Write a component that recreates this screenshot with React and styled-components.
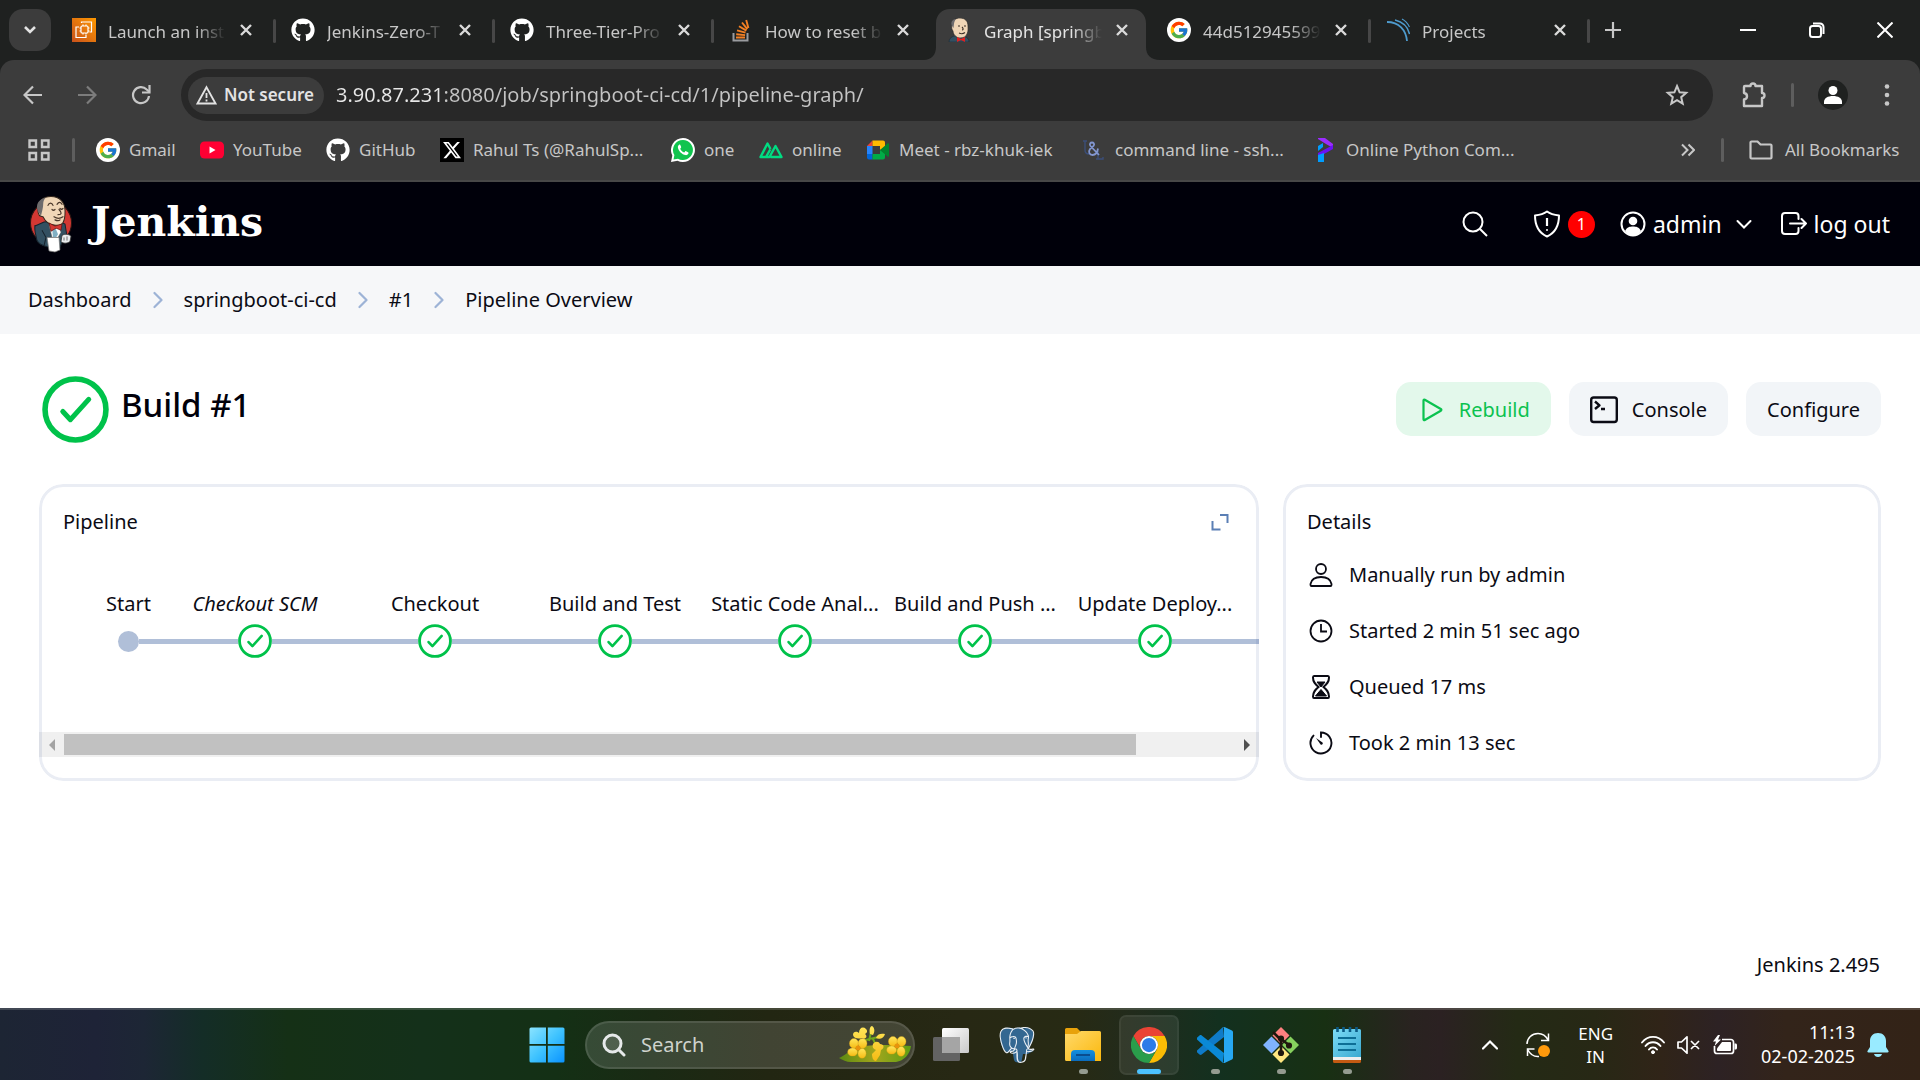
import React from "react";
import styled, { createGlobalStyle, css } from "styled-components";
import { FaGithub, FaXTwitter } from "react-icons/fa6";
import { FcGoogle } from "react-icons/fc";
import { SiPostgresql } from "react-icons/si";

const sans = `"Noto Sans", "Open Sans", sans-serif`;

const GlobalStyle = createGlobalStyle`
  *, *::before, *::after { box-sizing: border-box; }
  body { margin: 0; font-family: ${sans}; font-size: 20px; line-height: 28px; color: #0b0b14; background: #fff; }
  button, input { font: inherit; color: inherit; border: 0; background: none; padding: 0; margin: 0; outline: none; }
  a { color: inherit; text-decoration: none; }
  h1, h2, ul, ol, p { margin: 0; padding: 0; font-weight: 400; list-style: none; }
  svg { display: block; flex: none; }
`;

const Screen = styled.div`
  min-height: 100vh;
  display: flex;
  flex-direction: column;
`;

/* ---------- browser: tab strip ---------- */
const TabStrip = styled.div`
  height: 60px;
  display: flex;
  align-items: center;
  padding: 0 20px 0 9px;
  background: #1f2120;
  color: #c7c7c7;
  font-size: 17px;
`;
const TabMenu = styled.button`
  width: 42px;
  height: 42px;
  display: grid;
  place-items: center;
  border-radius: 14px;
  background: #3c3c3c;
  color: #e3e3e3;
  margin-right: 5px;
`;
const Tab = styled.div`
  position: relative;
  width: 219px;
  height: 60px;
  display: flex;
  align-items: center;
  gap: 12px;
  padding: 0 17px 0 16px;
  &::after {
    content: "";
    position: absolute;
    right: -1px;
    top: 19px;
    width: 3px;
    height: 24px;
    border-radius: 2px;
    background: ${(p) => (p.$bare ? "transparent" : "#474747")};
  }
`;
const ActiveShape = styled.svg`
  position: absolute;
  left: -8px;
  top: 9px;
`;
const TabTitle = styled.span`
  position: relative;
  flex: 1;
  padding-top: 3px;
  margin-right: -6px;
  white-space: nowrap;
  overflow: hidden;
  color: ${(p) => (p.$active ? "#e3e3e3" : "#c7c7c7")};
  mask-image: linear-gradient(to right, #000 88px, transparent 118px);
`;
const TabIcon = styled.span`
  position: relative;
  width: 24px;
  height: 24px;
  display: grid;
  place-items: center;
`;
const TabClose = styled.button`
  position: relative;
  width: 24px;
  height: 24px;
  display: grid;
  place-items: center;
  color: #dadada;
`;
const NewTab = styled.button`
  width: 48px;
  height: 42px;
  display: grid;
  place-items: center;
`;
const WindowControls = styled.div`
  display: flex;
  margin-left: auto;
  color: #fff;
  button {
    width: 69px;
    height: 56px;
    display: grid;
    place-items: center;
  }
  button:last-child { width: 30px; margin-left: 19px; }
`;

/* ---------- browser: address bar ---------- */
const Chrome = styled.div`
  background: #1f2120;
`;
const ChromeBody = styled.div`
  background: #3c3c3c;
  border-radius: 14px 14px 0 0;
  border-bottom: 2px solid #474747;
  color: #c7c7c7;
`;
const AddressRow = styled.div`
  height: 70px;
  display: flex;
  align-items: center;
  padding: 0 20px 0 6px;
`;
const NavButton = styled.button`
  width: 54px;
  height: 42px;
  display: grid;
  place-items: center;
  color: ${(p) => (p.$muted ? "#7c7c7c" : "#c7c7c7")};
`;
const Omnibox = styled.div`
  flex: 1;
  height: 52px;
  margin-left: 13px;
  display: flex;
  align-items: center;
  gap: 12px;
  padding: 0 24px 0 7px;
  border-radius: 26px;
  background: #282828;
`;
const SecurityChip = styled.button`
  height: 37px;
  display: flex;
  align-items: center;
  gap: 7px;
  padding: 0 10px 0 8px;
  border-radius: 19px;
  background: #3c3c3c;
  color: #e3e3e3;
  font-size: 17px;
  font-weight: 600;
`;
const UrlInput = styled.input`
  flex: 1;
  height: 36px;
  padding-bottom: 2px;
  font-size: 20px;
  color: transparent;
  background: linear-gradient(to right, #e8e8e8 104px, #c4c4c4 104px);
  background-clip: text;
  -webkit-background-clip: text;
`;
const ToolbarRight = styled.div`
  display: flex;
  align-items: center;
  margin-left: 28px;
`;
const Divider = styled.span`
  width: 3px;
  height: 24px;
  margin: 0 ${(p) => p.$after || 0}px 0 ${(p) => p.$before}px;
  border-radius: 2px;
  background: #5e5e5e;
`;
const Avatar = styled.button`
  width: 30px;
  height: 30px;
  margin: 0 26px 0 24px;
  border-radius: 50%;
  background: #1f2120;
  display: grid;
  place-items: center;
`;
const IconButton = styled.button`
  display: grid;
  place-items: center;
`;

const BookmarkRow = styled.div`
  height: 50px;
  display: flex;
  align-items: center;
  padding: 0 21px 11px 27px;
  font-size: 17px;
`;
const Bookmarks = styled.nav`
  display: flex;
  flex: 1;
  margin-left: 21px;
`;
const Bookmark = styled.a`
  display: flex;
  align-items: center;
  gap: ${(p) => p.$gap || 9}px;
  height: 30px;
  white-space: nowrap;
  width: ${(p) => p.$w}px;
`;
const IconSlot = styled.span`
  width: 24px;
  height: 24px;
  flex: none;
  display: grid;
  place-items: center;
  border-radius: ${(p) => (p.$round ? "50%" : "0")};
  background: ${(p) => p.$bg || "transparent"};
`;

/* ---------- jenkins ---------- */
const JenkinsBar = styled.header`
  height: 84px;
  display: flex;
  align-items: center;
  justify-content: space-between;
  padding: 0 30px 0 29px;
  background: #00000a;
  color: #fff;
`;
const Brand = styled.a`
  display: flex;
  align-items: center;
  gap: 18px;
  font-family: "DejaVu Serif", serif;
  font-weight: 700;
  font-size: 41px;
  line-height: 48px;
  span { padding-bottom: 4px; }
`;
const BarActions = styled.div`
  display: flex;
  align-items: center;
  font-size: 23px;
`;
const BarItem = styled.a`
  display: flex;
  align-items: center;
  gap: 7px;
  margin-left: ${(p) => p.$gap}px;
`;
const BarButton = styled(BarItem).attrs({ as: "button" })``;
const Count = styled.span`
  width: 27px;
  height: 27px;
  border-radius: 50%;
  background: #f00;
  font-size: 16px;
  line-height: 27px;
  text-align: center;
`;
const Crumbs = styled.ol`
  height: 68px;
  display: flex;
  align-items: center;
  padding: 0 28px;
  background: #f6f7f9;
  li { display: flex; align-items: center; }
  svg { margin: 0 21px; }
`;
const Main = styled.main`
  flex: 1;
  padding: 0 39px;
  background: #fff;
`;
const BuildHeader = styled.div`
  height: 150px;
  display: flex;
  align-items: center;
  justify-content: space-between;
`;
const BuildTitle = styled.div`
  display: flex;
  align-items: center;
  gap: 12px;
  padding-left: 3px;
  h1 {
    font-size: 33px;
    line-height: 48px;
    font-weight: 500;
    padding-bottom: 8px;
    color: #00000a;
  }
`;
const Actions = styled.div`
  display: flex;
  gap: 18px;
`;
const Action = styled.button`
  height: 54px;
  display: flex;
  align-items: center;
  gap: 14px;
  padding: 2px 21px 0;
  border-radius: 15px;
  background: #f2f5f8;
  ${(p) =>
    p.$primary &&
    css`
      background: #e3f8eb;
      color: #0ac24f;
    `}
`;
const Cards = styled.div`
  display: grid;
  grid-template-columns: minmax(0, 1220fr) minmax(0, 598fr);
  gap: 24px;
`;
const Card = styled.section`
  position: relative;
  display: flex;
  flex-direction: column;
  padding: 24px 0;
  border-radius: 24px;
  overflow: hidden;
  &::after {
    content: "";
    position: absolute;
    inset: 0;
    border: 3px solid rgba(20, 60, 130, 0.09);
    border-radius: 24px;
    pointer-events: none;
  }
`;
const CardHeader = styled.div`
  display: flex;
  align-items: center;
  justify-content: space-between;
  padding: 0 29px 0 24px;
  h2 { font-size: 20px; line-height: 28px; }
`;
const Stages = styled.ol`
  display: flex;
  padding: 54px 0 74px 53px;
  overflow: hidden;
`;
const Stage = styled.li`
  flex: none;
  width: ${(p) => (p.$start ? 73 : 180)}px;
  display: flex;
  flex-direction: column;
  gap: 6px;
`;
const StageLabel = styled.span`
  height: 28px;
  text-align: center;
  white-space: nowrap;
  font-style: ${(p) => (p.$italic ? "italic" : "normal")};
`;
const StageNode = styled.span`
  height: 34px;
  display: flex;
  align-items: center;
`;
const Link = styled.i`
  flex: 1;
  height: 5px;
  background: ${(p) => (p.$hidden ? "transparent" : "#b0bfd8")};
`;
const StartDot = styled.i`
  width: 21px;
  height: 21px;
  border-radius: 50%;
  background: #b0bfd8;
`;
const ScrollTrack = styled.div`
  height: 25px;
  display: flex;
  align-items: center;
  background: #f0f0f0;
`;
const ScrollArrow = styled.button`
  width: 25px;
  height: 25px;
  display: grid;
  place-items: center;
  color: ${(p) => p.$color};
`;
const ScrollRail = styled.div`
  flex: 1;
  display: grid;
  grid-template-columns: 1072fr 98fr;
  &::before {
    content: "";
    height: 21px;
    background: #c1c1c1;
  }
`;
const Details = styled.ul`
  display: flex;
  flex-direction: column;
  gap: 28px;
  padding: 25px 24px 0;
  li { display: flex; align-items: center; gap: 14px; }
`;
const DetailIcon = styled.span`
  width: 28px;
  height: 28px;
  display: grid;
  place-items: center;
`;
const Footer = styled.footer`
  padding: 0 40px 29px;
  text-align: right;
  background: #fff;
`;

/* ---------- taskbar ---------- */
const Taskbar = styled.footer`
  height: 72px;
  display: grid;
  grid-template-columns: 1fr auto 1fr;
  align-items: center;
  padding-right: 26px;
  border-top: 2px solid rgba(255, 255, 255, 0.16);
  color: #fff;
  background: linear-gradient(
    to right,
    #1d2534 0%, #1e2337 5%, #1d2635 7.5%, #142d27 10.5%, #153016 15%, #14301a 22%,
    #143015 29%, #1a2a14 34%, #222612 40%, #272814 50%, #272a14 56%, #222b1c 59%, #13301f 63.5%,
    #183013 69%, #292320 73.5%, #2b2122 75%, #242a15 79%, #272815 83%, #302418 86.5%, #2d2224 89.5%, #33241a 93%, #332317 100%
  );
  background-origin: border-box;
`;
const Dock = styled.div`
  grid-column: 2;
  display: flex;
  align-items: center;
  gap: 6px;
`;
const DockButton = styled.button`
  position: relative;
  width: 60px;
  height: 60px;
  display: grid;
  place-items: center;
  border-radius: 7px;
  ${(p) =>
    p.$active &&
    css`
      background: rgba(255, 255, 255, 0.08);
      box-shadow: inset 0 0 0 2px rgba(255, 255, 255, 0.05);
    `}
  &::after {
    content: "";
    position: absolute;
    bottom: 1px;
    width: ${(p) => (p.$active ? 24 : 9)}px;
    height: 5px;
    border-radius: 3px;
    background: ${(p) => (p.$active ? "#4cc2ff" : p.$open ? "#949b90" : "transparent")};
  }
`;
const DockSearch = styled.label`
  width: 330px;
  height: 48px;
  margin: 0 0 0 2px;
  display: flex;
  align-items: center;
  gap: 15px;
  padding: 0 2px 0 17px;
  border-radius: 24px;
  background: rgba(255, 255, 255, 0.14);
  box-shadow: inset 0 0 0 2px rgba(255, 255, 255, 0.1);
  input {
    flex: 1;
    width: 40px;
    height: 28px;
    font-size: 20px;
  }
  input::placeholder { color: #cfd3cd; opacity: 1; }
`;
const Tray = styled.div`
  display: flex;
  align-items: center;
  justify-content: flex-end;
  padding-right: 5px;
  gap: 24px;
  font-size: 17px;
  line-height: 23px;
`;
const TrayStatus = styled.div`
  display: flex;
  align-items: center;
  gap: 28px;
`;
const TrayGroup = styled.button`
  display: flex;
  align-items: center;
  gap: 12px;
`;
const TrayText = styled.span`
  display: flex;
  flex-direction: column;
  text-align: ${(p) => p.$align};
`;
const Clock = styled(TrayText)`
  font-size: 18px;
  line-height: 24px;
  padding-bottom: 2px;
`;

/* ---------- icons ---------- */
const Line = ({ s = 24, vb = 24, w = 2, children, ...rest }) => (
  <svg width={s} height={s} viewBox={`0 0 ${vb} ${vb}`} fill="none" stroke="currentColor" strokeWidth={w} {...rest}>
    {children}
  </svg>
);
const Cross = ({ s = 12, w = 2.4 }) => (
  <Line s={s} vb={12} w={w}><path d="M1 1 11 11M11 1 1 11" /></Line>
);
const GoogleBadge = () => <IconSlot $round $bg="#fff"><FcGoogle size={20} /></IconSlot>;

const Ec2Icon = () => (
  <svg width="24" height="24" viewBox="0 0 24 24">
    <defs><linearGradient id="ec2" x1="0" y1="1" x2="1" y2="0"><stop stopColor="#c8511b" /><stop offset="1" stopColor="#f90" /></linearGradient></defs>
    <path fill="url(#ec2)" d="M0 0h24v24H0z" />
    <g fill="none" stroke="#fff" strokeWidth="1.2">
      <path d="M9.500 5V4h10v10h-2M7 9H4v10.500h10V17" />
      <rect x="9" y="8" width="7" height="7" rx="1" />
      <path d="M11 6.500V8M14 6.500V8M11 15v1.500M14 15v1.500M7.500 10H9M7.500 13H9M16 10h1.500M16 13h1.500" />
    </g>
  </svg>
);
const StackIcon = () => (
  <svg width="24" height="24" viewBox="0 0 24 24" fill="none">
    <path d="M4.500 15v7.500h14V15" stroke="#9a9c9f" strokeWidth="2" />
    <path d="M7 19.500h9M7.200 16.200l8.900.9M8 12.300l8.500 2.300M10 8.200l7.400 4.400M13 4.500l5.300 6.700M17.200 2l2.200 8" stroke="#f48024" strokeWidth="1.900" />
  </svg>
);
const ButlerHead = () => (
  <svg width="24" height="24" viewBox="0 0 24 24">
    <path d="M1 24c0-3 2-5 5-6l12 1c2 1 3 3 3 5z" fill="#335061" stroke="#1b2a35" strokeWidth=".6" />
    <path d="M4 7C4 2 8 0 12 0c5 0 8 3 8 8 0 3 .5 5-1 8-1 3-4 4-7 4-4 0-7-4-7-7-1-1-2-4-1-6z" fill="#f0d6b7" stroke="#2a2a2a" strokeWidth=".7" />
    <path d="M4 8C2 4 5 1 8 1 6 3 6 6 5.500 10z" fill="#6d6b6d" />
    <path d="M10 8h2M16 8h2M14 9c2 2 1 3 0 3M11 15c2 1 4 1 6-.5" fill="none" stroke="#3c3028" strokeWidth="1.100" />
    <path d="m9 19 4 2 4-2v5l-4-2-4 2z" fill="#e02020" />
  </svg>
);
const SonarIcon = () => (
  <svg width="24" height="24" viewBox="0 0 24 24" fill="none" stroke="#4e9bcd">
    <path d="M1 4c12 0 19 8 20 19" strokeWidth="1.800" />
    <path d="M9 2c8 2 13 7 14.500 14" strokeWidth="1.400" />
    <path d="M16 1c4 2 6 5 7.500 8" strokeWidth="1.200" />
  </svg>
);
const YouTubeIcon = () => (
  <svg width="24" height="18" viewBox="0 0 24 18"><rect width="24" height="17" y=".5" rx="4.500" fill="#f03" /><path d="m9.500 5.500 6 3.500-6 3.500z" fill="#fff" /></svg>
);
const WhatsAppIcon = () => (
  <svg width="24" height="24" viewBox="0 0 24 24">
    <path d="M12 0a12 12 0 1 1-5.500 22.700L0 24l1.300-6.500A12 12 0 0 1 12 0z" fill="#fff" />
    <path d="M12 2a10 10 0 1 1-5 18.700L2.500 21.500l.9-4.400A10 10 0 0 1 12 2z" fill="#10c44e" />
    <path d="M8.500 6.500c-1 .5-1.800 1.700-1.600 3 .5 3.500 4 7 7.600 7.600 1.500.2 2.700-.7 3-1.900.1-.5 0-.8-.4-1l-2-1c-.4-.2-.7-.1-1 .3l-.8 1c-2-.7-3.300-2-4.100-3.800l.8-1c.2-.3.2-.6.1-.9l-.9-2c-.2-.4-.4-.4-.7-.3z" fill="#fff" />
  </svg>
);
const NuxtIcon = () => (
  <svg width="24" height="18" viewBox="0 0 24 18" fill="none" stroke="#00dc82" strokeWidth="2.400" strokeLinejoin="round">
    <path d="M8 16H1.500L8.500 2.500l3 5.500M11.500 16h11L16.500 5l-6 11H7l4.500-8" />
  </svg>
);
const MeetIcon = () => (
  <svg width="24" height="20" viewBox="0 0 24 20">
    <path d="M1 6 6.500.5V6z" fill="#ea4335" /><path d="M1 6h5.500v8H1z" fill="#2684fc" /><path d="M1 14h5.500v5.500H3a2 2 0 0 1-2-2z" fill="#0066da" />
    <path d="M6.500.5H17a2 2 0 0 1 2 2V7l-5 3V6H6.500z" fill="#ffba00" /><path d="M6.500 14H14v-4l5 3v4.500a2 2 0 0 1-2 2H6.500z" fill="#00ac47" /><path d="m14 10 7.500-6.500c.6-.5 1.500-.2 1.500.6v11.800c0 .8-.9 1.100-1.500.6z" fill="#00832d" />
  </svg>
);
const UnixIcon = () => (
  <svg width="24" height="24" viewBox="0 0 24 24" fill="none" stroke="#3b5287" strokeWidth="1.400">
    <path d="M1 3h4M3 3v9c0 3 2 4 4 4M14 21h4M16 13v8h5v-2" opacity=".8" />
    <path d="M17 17 8.500 8C7 6 8.500 4.500 10 4.500s3 1.500 1.500 3.500L8 11c-2 3-.5 6 2.500 6s5-3 5.500-6.500" stroke="#8296d0" strokeWidth="1.800" />
  </svg>
);
const ProgramizIcon = () => (
  <svg width="16" height="24" viewBox="0 0 16 24">
    <path d="M1 0h7l8 6v4L9 6 1 1z" fill="#9b2bff" /><path d="M16 7v4L7 16l-6 2v-3z" fill="#6a11f5" />
    <path d="M1 8l5-3v4l-5 4zM1 17l6-2v9H1z" fill="#009dff" />
  </svg>
);

const ButlerLogo = () => (
  <svg width="44" height="58" viewBox="0 0 44 56" preserveAspectRatio="none">
    <circle cx="22" cy="27" r="20.500" fill="#d33833" stroke="#2b1512" />
    <path d="M6 30l9-4 14-1 7 3 2 12-4 4-4 8-12-2c-4-1-8-2-10-6-1-5-3-10-2-15z" fill="#335061" stroke="#16232d" />
    <path d="m20 29 4 2 5-3 3 8-3 5h-6z" fill="#fff" stroke="#555" strokeWidth=".5" />
    <path d="M23 31h3l3 7-2 3h-3z" fill="#81b0c4" />
    <path d="M9 15C8 6 14 1.500 22 1.500c9 0 14 6 14 13 0 4 .5 8-2 12-2 3-6 3-9 2.500-5-.5-9-4-11-8-4 0-5-3-5-6z" fill="#f0d6b7" stroke="#33261c" />
    <path d="M9 16C6 9 10 4 17 2.500 13 6 15 9 13.500 14l-1.500 6z" fill="#6d6b6d" />
    <path d="M19 10c1-3 4-3 5 0M28 9c2-3 4-2 5 0M23 14c1 1 2 1 3 0M31 13c1 1 2 1 3 0M30 14c3 3 3 5-1 5M25 21c3 2 6 2 9 0M26 24c2 1 4 1 5 0" fill="none" stroke="#49372a" strokeWidth="1.200" strokeLinecap="round" />
    <path d="m20 27 6 3 7-2-1 6-5-2-5 3z" fill="#d33833" stroke="#61100d" strokeWidth=".7" />
    <path d="m13 34 4 7-2 8" fill="none" stroke="#16232d" />
    <path d="M18 41h12l1 12-5 2-6-1z" fill="#fff" stroke="#777" strokeWidth=".7" />
    <path d="M33 39c3-2 8-1 9 1l-1 5c-3 2-7 2-9 0z" fill="#e9ecee" stroke="#333" strokeWidth=".8" />
    <path d="M35 41v3M38 40v4" stroke="#555" strokeWidth=".8" />
  </svg>
);
const CheckCircle = ({ size }) => (
  <svg width={size} height={size} viewBox="0 0 66 66" fill="none" stroke="#00c24a" strokeLinecap="round" strokeLinejoin="round">
    <circle cx="33" cy="33" r="30" strokeWidth="5.500" />
    <path d="m20.500 35 7.500 8L46 23" strokeWidth="5" />
  </svg>
);

const WindowsLogo = () => (
  <svg width="36" height="36" viewBox="0 0 36 36">
    <defs><linearGradient id="win" x1="0" y1="0" x2="1" y2="1"><stop stopColor="#8be4ff" /><stop offset=".5" stopColor="#3fc3ff" /><stop offset="1" stopColor="#0a93ff" /></linearGradient></defs>
    <path fill="url(#win)" d="M2 .5h15v16.500H.5V2A1.500 1.500 0 0 1 2 .5zM18.800.5H34A1.500 1.500 0 0 1 35.500 2v15H18.800zM.5 18.800H17v16.700H2A1.500 1.500 0 0 1 .5 34zM18.800 18.800h16.700V34a1.500 1.500 0 0 1-1.500 1.500H18.800z" />
  </svg>
);
const Petals = ({ x, y, s = 1 }) => (
  <g transform={`translate(${x} ${y}) scale(${s})`}>
    <g fill="url(#petal)" stroke="#d99a10" strokeWidth=".4">
      <ellipse cx="-4.500" cy="-5" rx="5" ry="5.500" /><ellipse cx="5" cy="-5" rx="5" ry="5.500" /><ellipse cx="-6" cy="4.500" rx="5.500" ry="4.500" /><ellipse cx="4.500" cy="6" rx="4.500" ry="5.500" />
    </g>
    <circle r="2.800" fill="#e8930c" />
  </g>
);
const Flowers = () => (
  <svg width="74" height="40" viewBox="0 0 74 40">
    <defs>
      <linearGradient id="petal" x1="0" y1="0" x2="0" y2="1"><stop stopColor="#ffe65a" /><stop offset="1" stopColor="#f6bb14" /></linearGradient>
      <linearGradient id="leaf" x1="0" y1="0" x2="1" y2="0"><stop stopColor="#5c8a12" /><stop offset=".5" stopColor="#a3a51c" /><stop offset="1" stopColor="#5d9e14" /></linearGradient>
    </defs>
    <path d="M0 33c6-2 10-8 18-11 18-3 36-2 54-1-1 8-7 15-15 16H12c-5 0-8-2-12-4z" fill="url(#leaf)" />
    <path d="M22 17c6-3 10-4 20-5M30 16l2-9M34 14l4 8" stroke="#6fa51b" strokeWidth="2" fill="none" />
    <Petals x={19} y={23} s={0.9} /><Petals x={58} y={21} s={0.9} />
    <path d="M14 10c0-4 4-4 6-2 0-5 4-7 7-4 2 2 1 4-1 5 3 2 1 6-3 4-3 1-8 1-9-3zM31 9c-1-4 0-8 2-8 3 2 3 6 1 9zM37 13c1-4 5-5 9-4-1 4-5 6-9 4zM34 19c2-3 6-3 7 0 4 0 5 4 1 6l-1 5-4 6c-3 0-4-4-4-7 2-2 3-3 4-4-3-1-4-3-3-6z" fill="url(#petal)" />
  </svg>
);
const TaskView = () => (
  <svg width="36" height="34" viewBox="0 0 36 34">
    <defs><linearGradient id="tv" x1="0" y1="0" x2="1" y2="1"><stop stopColor="#fff" /><stop offset="1" stopColor="#c9c9c9" /></linearGradient></defs>
    <rect y="9" width="27" height="24" rx="1.500" fill="#636363" /><rect x="9" width="27" height="25" rx="1.500" fill="url(#tv)" />
    <path d="M9 9h18v16H10.500A1.500 1.500 0 0 1 9 23.500z" fill="#a5a5a5" />
  </svg>
);
const ElephantWrap = styled.span`
  display: grid;
  place-items: center;
  > * { grid-area: 1 / 1; }
`;
const Elephant = () => (
  <ElephantWrap>
    <svg width="36" height="36" viewBox="0 0 24 24"><path fill="#336791" d="M1 4C2 .5 7 0 10 1c3-1 5-1 7 0 3-1 6 1 6 4 0 4-2 7-3 10l3 1-4 2-3 0-1 5c-2 1-4 1-5-1l-1-6-3 1-2-1C1 13 .5 8 1 4z" /></svg>
    <SiPostgresql size={36} color="#e9eef3" />
  </ElephantWrap>
);
const FolderIcon = () => (
  <svg width="36" height="34" viewBox="0 0 36 34">
    <defs><linearGradient id="fold" x1="0" y1="0" x2="1" y2="1"><stop stopColor="#ffd96a" /><stop offset="1" stopColor="#fbb80d" /></linearGradient><linearGradient id="fb" x1="0" y1="0" x2="0" y2="1"><stop stopColor="#1490df" /><stop offset="1" stopColor="#0b6cbd" /></linearGradient></defs>
    <path d="M0 1.500A1.500 1.500 0 0 1 1.500 0H12l4 4v6H0z" fill="#e8a20b" />
    <path d="M0 6h12l4-3h18.500A1.500 1.500 0 0 1 36 4.500V33H1.500A1.500 1.500 0 0 1 0 31.500z" fill="url(#fold)" />
    <path d="M6 33v-7a4 4 0 0 1 4-4h16a4 4 0 0 1 4 4v7z" fill="url(#fb)" /><path d="M11 27h14" stroke="#0a4d8f" strokeWidth="2" />
  </svg>
);
const ChromeIcon = () => (
  <svg width="36" height="36" viewBox="0 0 48 48">
    <path fill="#ea4335" d="M3.200 12A24 24 0 0 1 44.800 12H24a12 12 0 0 0-10.400 18z" />
    <path fill="#fbbc05" d="M44.800 12A24 24 0 0 1 24 48l10.400-18A12 12 0 0 0 24 12z" />
    <path fill="#2a9d4b" d="M24 48A24 24 0 0 1 3.200 12l10.400 18a12 12 0 0 0 20.800 0z" />
    <circle cx="24" cy="24" r="12" fill="#fff" /><circle cx="24" cy="24" r="9.500" fill="#2c7be8" />
  </svg>
);
const CodeIcon = () => (
  <svg width="36" height="36" viewBox="0 0 36 36">
    <path d="M26 0 0 23.500c-.6 1 0 1.800.5 2.200L2.500 27.500c.8.600 1.500.5 2.200 0L27 10z" fill="#0f7bc8" />
    <path d="M26 36 0 12.500c-.6-1 0-1.800.5-2.200L2.500 8.500c.8-.6 1.500-.5 2.200 0L27 26z" fill="#0a89d6" />
    <path d="M26 0c1 0 1.500 0 2 .3l7 3.300c.7.400 1 .9 1 1.600v25.600c0 .7-.3 1.200-1 1.600l-7 3.300c-.5.300-1 .3-2 .3.600-.3 1-1 1-1.700V1.700C27 1 26.600.3 26 0z" fill="#27a8f2" />
  </svg>
);
const GitIcon = () => (
  <svg width="36" height="36" viewBox="0 0 36 36">
    <path fill="#ff8080" d="m18 0 8.500 8.500L18 17 9.500 8.500z" /><path fill="#80b3ff" d="M8.500 9.500 17 18l-8.500 8.500L0 18z" /><path fill="#87d15e" d="M27.500 9.500 36 18l-8.500 8.500L19 18z" /><path fill="#ffe680" d="m18 19 8.500 8.500L18 36l-8.500-8.500z" />
    <g stroke="#20180f" strokeWidth="2.600" fill="#20180f"><path d="M10 5l8 8v13M18 12l8 6" fill="none" /><circle cx="18" cy="11.500" r="1.800" /><circle cx="26" cy="18.500" r="1.800" /><circle cx="18" cy="26" r="1.800" /></g>
  </svg>
);
const NotepadIcon = () => (
  <svg width="28" height="36" viewBox="0 0 28 36">
    <defs><linearGradient id="np" x1="0" y1="0" x2="1" y2="1"><stop stopColor="#7ddcf7" /><stop offset="1" stopColor="#3aa9d0" /></linearGradient></defs>
    <path d="M0 28h28v6.500a1.500 1.500 0 0 1-1.500 1.500h-25A1.500 1.500 0 0 1 0 34.500z" fill="#c35a12" /><path d="M0 26h28v7H0z" fill="#eee" />
    <path d="M1.500 2h25A1.500 1.500 0 0 1 28 3.500V30H0V3.500A1.500 1.500 0 0 1 1.500 2z" fill="url(#np)" />
    <path d="M4.500 0v5M10.500 0v5M17 0v5M23.500 0v5" stroke="#0a5a85" strokeWidth="2.600" /><path d="M5 11h18M5 17h18M5 23h18" stroke="#0d6e96" strokeWidth="2" />
  </svg>
);

/* ---------- content ---------- */
const tabs = [
  { title: "Launch an inst", icon: <Ec2Icon /> },
  { title: "Jenkins-Zero-T", icon: <FaGithub size={24} color="#fff" /> },
  { title: "Three-Tier-Pro", icon: <FaGithub size={24} color="#fff" /> },
  { title: "How to reset b", icon: <StackIcon />, bare: true },
  { title: "Graph [springb", icon: <ButlerHead />, active: true, bare: true },
  { title: "44d512945599", icon: <GoogleBadge /> },
  { title: "Projects", icon: <SonarIcon /> },
];
const bookmarks = [
  { label: "Gmail", w: 104, icon: <GoogleBadge /> },
  { label: "YouTube", w: 126, icon: <YouTubeIcon /> },
  { label: "GitHub", w: 114, icon: <FaGithub size={24} color="#fff" /> },
  { label: "Rahul Ts (@RahulSp...", w: 231, icon: <IconSlot $bg="#000"><FaXTwitter size={20} color="#fff" /></IconSlot> },
  { label: "one", w: 88, icon: <WhatsAppIcon /> },
  { label: "online", w: 107, icon: <NuxtIcon /> },
  { label: "Meet - rbz-khuk-iek", w: 216, icon: <MeetIcon /> },
  { label: "command line - ssh...", w: 231, icon: <UnixIcon /> },
  { label: "Online Python Com...", w: 206, icon: <ProgramizIcon /> },
];
const stages = [
  { name: "Checkout SCM", italic: true },
  { name: "Checkout" },
  { name: "Build and Test" },
  { name: "Static Code Anal..." },
  { name: "Build and Push ..." },
  { name: "Update Deploy..." },
];
const details = [
  { text: "Manually run by admin", icon: <Line w={1.8}><circle cx="12" cy="6" r="5" /><path d="M1.500 22v-1c1-5 5-7 10.500-7s9.500 2 10.500 7v1c0 .5-.5 1-1 1h-19c-.5 0-1-.5-1-1z" /></Line> },
  { text: "Started 2 min 51 sec ago", icon: <Line w={1.8}><circle cx="12" cy="12" r="10.500" /><path d="M12 5v7.500h6" /></Line> },
  { text: "Queued 17 ms", icon: <Line w={2}><path d="M5 1h14c1 0 1 1 1 1.500C20 7 18 9 14.500 12 18 15 20 17 20 21.500c0 .5 0 1.500-1 1.500H5c-1 0-1-1-1-1.500C4 17 6 15 9.500 12 6 9 4 7 4 2.500 4 2 4 1 5 1z" /><path d="M8 7h8l-4 5zM6.500 21l5.500-6.500 5.500 6.500z" fill="currentColor" strokeWidth="1" /></Line> },
  { text: "Took 2 min 13 sec", icon: <Line w={1.9}><path d="M12 6V1.500A10.500 10.500 0 1 1 4.500 4.600" strokeLinecap="round" /><path d="M7 7l6.500 4.500c1 1-.6 3-1.900 2z" fill="currentColor" stroke="none" /></Line> },
];
const Chevron = () => (
  <svg width="10" height="18" viewBox="0 0 10 18" fill="none" stroke="#9db3d6" strokeWidth="2.200" strokeLinecap="round" strokeLinejoin="round"><path d="m1.500 2 7 7-7 7" /></svg>
);

export default function App() {
  return (
    <Screen>
      <GlobalStyle />
      <TabStrip>
        <TabMenu aria-label="Search tabs"><Line s={14} vb={14} w={2.6}><path d="m2 4 5 5 5-5" /></Line></TabMenu>
        {tabs.map((t) => (
          <Tab key={t.title} $bare={t.bare}>
            {t.active && (
              <ActiveShape width="236" height="51" viewBox="0 0 236 51">
                <path fill="#3c3c3c" d="M0 51c7 0 12-5 12-13V14C12 6 18 0 26 0h182c8 0 14 6 14 14v24c0 8 5 13 14 13z" />
              </ActiveShape>
            )}
            <TabIcon>{t.icon}</TabIcon>
            <TabTitle $active={t.active}>{t.title}</TabTitle>
            <TabClose aria-label={`Close ${t.title}`}><Cross /></TabClose>
          </Tab>
        ))}
        <NewTab aria-label="New tab"><Line s={16} vb={16} w={2.2}><path d="M8 0v16M0 8h16" /></Line></NewTab>
        <WindowControls>
          <button aria-label="Minimize"><Line s={16} vb={16} w={2}><path d="M0 8h16" /></Line></button>
          <button aria-label="Restore"><Line s={16} vb={16} w={2}><rect x="1" y="4" width="11" height="11" rx="2.500" /><path d="M4 1.500h7A3.500 3.500 0 0 1 14.500 5v7" /></Line></button>
          <button aria-label="Close"><Line s={16} vb={16} w={2}><path d="m.5.500 15 15M15.500.500l-15 15" /></Line></button>
        </WindowControls>
      </TabStrip>

      <Chrome>
        <ChromeBody>
          <AddressRow>
            <NavButton aria-label="Back"><Line s={20} vb={20} w={2.2}><path d="M19 10H2M10 1.500 1.500 10l8.500 8.500" /></Line></NavButton>
            <NavButton aria-label="Forward" $muted><Line s={20} vb={20} w={2.2}><path d="M1 10h17M10 1.500l8.500 8.500-8.500 8.500" /></Line></NavButton>
            <NavButton aria-label="Reload"><Line s={20} vb={20} w={2.2}><path d="M18 11a8 8 0 1 1-2.300-6.500L18.500 7" /><path d="M18.500 0v7.500h-7.500" /></Line></NavButton>
            <Omnibox>
              <SecurityChip>
                <Line s={21} vb={21} w={1.8}><path d="M10.500 2.200 19.500 18.500h-18z" /><path d="M10.500 8v5M10.500 14.500v2" /></Line>
                Not secure
              </SecurityChip>
              <UrlInput aria-label="Address" defaultValue="3.90.87.231:8080/job/springboot-ci-cd/1/pipeline-graph/" />
              <IconButton aria-label="Bookmark this page"><Line s={24} w={2}><path d="m12 3 2.600 6.300 6.600.5-5 4.400 1.500 6.500L12 17.200l-5.700 3.500 1.500-6.500-5-4.400 6.600-.5z" /></Line></IconButton>
            </Omnibox>
            <ToolbarRight>
              <IconButton aria-label="Extensions"><Line s={26} vb={26} w={2.4}><path d="M4 4h5.500a2.500 2.500 0 0 1 5 0H21v7a2.500 2.500 0 0 1 0 5v8H3v-6.500c4-.5 4-6 0-6.500V5a1 1 0 0 1 1-1z" strokeLinejoin="round" /></Line></IconButton>
              <Divider $before={24} />
              <Avatar aria-label="Profile"><svg width="20" height="20" viewBox="0 0 20 20" fill="#fff"><circle cx="10" cy="5.500" r="4.500" /><path d="M1 19v-2c0-4 4-6 9-6s9 2 9 6v2z" /></svg></Avatar>
              <IconButton aria-label="Menu"><svg width="26" height="24" viewBox="0 0 26 24" fill="#c7c7c7"><circle cx="13" cy="3.500" r="2.300" /><circle cx="13" cy="12" r="2.300" /><circle cx="13" cy="20.500" r="2.300" /></svg></IconButton>
            </ToolbarRight>
          </AddressRow>
          <BookmarkRow>
            <IconButton aria-label="Apps"><Line s={24} w={2.4}><path d="M2.500 2.500h6.500v6.500H2.500zM15 2.500h6.500v6.500H15zM2.500 15h6.500v6.500H2.500zM15 15h6.500v6.500H15z" /></Line></IconButton>
            <Divider $before={21} />
            <Bookmarks>
              {bookmarks.map((b) => (
                <Bookmark key={b.label} href="#" $w={b.w}><IconSlot>{b.icon}</IconSlot>{b.label}</Bookmark>
              ))}
            </Bookmarks>
            <IconButton aria-label="More bookmarks"><Line s={14} vb={14} w={2}><path d="m1 1.500 5.500 5.500L1 12.500M7.500 1.500 13 7l-5.500 5.500" /></Line></IconButton>
            <Divider $before={26} $after={25} />
            <Bookmark as="button" $w={150} $gap={12}>
              <IconSlot><Line s={24} w={2.2}><path d="M1.500 4.500a1 1 0 0 1 1-1h6l3 3h10a1 1 0 0 1 1 1v12a1 1 0 0 1-1 1h-19a1 1 0 0 1-1-1z" /></Line></IconSlot>
              All Bookmarks
            </Bookmark>
          </BookmarkRow>
        </ChromeBody>
      </Chrome>

      <JenkinsBar>
        <Brand href="#"><ButlerLogo /><span>Jenkins</span></Brand>
        <BarActions>
          <BarButton aria-label="Search" $gap={0}><Line s={26} vb={26} w={2}><circle cx="11" cy="11" r="9.500" /><path d="m18 18 7 7" /></Line></BarButton>
          <BarItem href="#" $gap={45}>
            <Line s={28} vb={28} w={2}><path d="M14 1.500c3.500 2.500 8 3.500 12 4 0 10-3 17-12 21C5 22.500 2 15.500 2 5.500c4-.5 8.500-1.500 12-4z" strokeLinejoin="round" /><path d="M14 8v8" strokeWidth="2.200" /><circle cx="14" cy="20" r="1" fill="currentColor" stroke="none" /></Line>
            <Count>1</Count>
          </BarItem>
          <BarItem href="#" $gap={25}>
            <svg width="26" height="26" viewBox="0 0 26 26"><circle cx="13" cy="13" r="11.500" fill="none" stroke="#fff" strokeWidth="2" /><circle cx="13" cy="10" r="4.300" fill="#fff" /><path d="M5 20c2-4 5-4.500 8-4.500s6 .5 8 4.500c-2 3-5 4.500-8 4.500S7 23 5 20z" fill="#fff" /></svg>
            admin
          </BarItem>
          <BarButton aria-label="User menu" $gap={14}><Line s={16} vb={16} w={2}><path d="m1.500 5 6.500 6.500L14.500 5" strokeLinecap="round" /></Line></BarButton>
          <BarItem href="#" $gap={29}>
            <Line s={26} vb={26} w={2} strokeLinecap="round" strokeLinejoin="round"><path d="M17.500 8V5a3 3 0 0 0-3-3H4a3 3 0 0 0-3 3v15a3 3 0 0 0 3 3h10.500a3 3 0 0 0 3-3v-3M9 12.500h16M20.500 8l4.500 4.500-4.500 4.500" /></Line>
            log out
          </BarItem>
        </BarActions>
      </JenkinsBar>

      <nav aria-label="Breadcrumb">
        <Crumbs>
          <li><a href="#">Dashboard</a><Chevron /></li>
          <li><a href="#">springboot-ci-cd</a><Chevron /></li>
          <li><a href="#">#1</a><Chevron /></li>
          <li><a href="#">Pipeline Overview</a></li>
        </Crumbs>
      </nav>

      <Main>
        <BuildHeader>
          <BuildTitle><CheckCircle size={67} /><h1>Build #1</h1></BuildTitle>
          <Actions>
            <Action $primary>
              <Line s={28} vb={28} w={2.2} strokeLinejoin="round"><path d="M6.500 4.500c0-.8.600-1.200 1.300-.8l16 9.300c.8.500.8 1.200 0 1.700l-16 9.300c-.7.400-1.300 0-1.300-.8z" /></Line>
              Rebuild
            </Action>
            <Action>
              <Line s={28} vb={28} w={2.4} strokeLinejoin="round"><rect x="1.200" y="1.500" width="25.600" height="24.500" rx="2.500" /><path d="m5 5.500 4.500 3.800L5 13M11 13h4" /></Line>
              Console
            </Action>
            <Action>Configure</Action>
          </Actions>
        </BuildHeader>
        <Cards>
          <Card>
            <CardHeader>
              <h2>Pipeline</h2>
              <IconButton aria-label="Expand"><Line s={20} vb={20} w={2} color="#5b7fb5"><path d="M10 3h7.500v8M2.500 9v8.500h8" /></Line></IconButton>
            </CardHeader>
            <Stages>
              <Stage $start>
                <StageLabel>Start</StageLabel>
                <StageNode><Link $hidden /><StartDot /><Link /></StageNode>
              </Stage>
              {stages.map((s) => (
                <Stage key={s.name}>
                  <StageLabel $italic={s.italic}>{s.name}</StageLabel>
                  <StageNode><Link /><CheckCircle size={34} /><Link /></StageNode>
                </Stage>
              ))}
              <Stage><StageLabel /><StageNode><Link /></StageNode></Stage>
            </Stages>
            <ScrollTrack>
              <ScrollArrow aria-label="Scroll left" $color="#a3a3a3"><svg width="6" height="12" viewBox="0 0 6 12" fill="currentColor"><path d="M6 0v12L0 6z" /></svg></ScrollArrow>
              <ScrollRail />
              <ScrollArrow aria-label="Scroll right" $color="#505050"><svg width="6" height="12" viewBox="0 0 6 12" fill="currentColor"><path d="M0 0v12l6-6z" /></svg></ScrollArrow>
            </ScrollTrack>
          </Card>
          <Card>
            <CardHeader><h2>Details</h2></CardHeader>
            <Details>
              {details.map((d) => (
                <li key={d.text}><DetailIcon>{d.icon}</DetailIcon>{d.text}</li>
              ))}
            </Details>
          </Card>
        </Cards>
      </Main>
      <Footer><a href="#">Jenkins 2.495</a></Footer>

      <Taskbar>
        <Dock>
          <DockButton aria-label="Start"><WindowsLogo /></DockButton>
          <DockSearch>
            <Line s={24} w={3} color="#e6e9ea"><circle cx="10.500" cy="10.500" r="8.500" fill="rgba(255,255,255,.12)" /><path d="m16.500 16.500 5.500 5.500" strokeLinecap="round" /></Line>
            <input type="text" placeholder="Search" aria-label="Search" />
            <Flowers />
          </DockSearch>
          <DockButton aria-label="Task view"><TaskView /></DockButton>
          <DockButton aria-label="PostgreSQL"><Elephant /></DockButton>
          <DockButton aria-label="File Explorer" $open><FolderIcon /></DockButton>
          <DockButton aria-label="Chrome" $active><ChromeIcon /></DockButton>
          <DockButton aria-label="Visual Studio Code" $open><CodeIcon /></DockButton>
          <DockButton aria-label="Git Bash" $open><GitIcon /></DockButton>
          <DockButton aria-label="Notepad" $open><NotepadIcon /></DockButton>
        </Dock>
        <Tray>
          <TrayStatus>
            <TrayGroup aria-label="Hidden icons"><Line s={16} vb={16} w={2.2}><path d="m1 11.500 7-7 7 7" strokeLinecap="round" /></Line></TrayGroup>
            <TrayGroup aria-label="Updates">
              <svg width="24" height="26" viewBox="0 0 24 26" fill="none" stroke="#fff" strokeWidth="1.500"><path d="M1 12C1 6 6 1.500 12 1.500c4.500 0 8 2.500 10 6.500M22.500 1.500V8.500H15M1.500 24v-7h7M2 18c2 4 6 7 11 6.500" /><circle cx="18" cy="19" r="6" fill="#ff9a0c" stroke="none" /></svg>
            </TrayGroup>
            <TrayText $align="center"><span>ENG</span><span>IN</span></TrayText>
            <TrayGroup aria-label="Network, sound and battery">
              <svg width="24" height="20" viewBox="0 0 24 20" fill="none" stroke="#fff" strokeWidth="1.900" strokeLinecap="round"><path d="M1 7.500c6-7.500 16-7.500 22 0M4.500 11c4-5 11-5 15 0M8 14.500c2-2.800 6-2.800 8 0" /><circle cx="12" cy="17.200" r="1.500" fill="#fff" strokeWidth="1" /></svg>
              <svg width="24" height="20" viewBox="0 0 24 20" fill="none" stroke="#fff" strokeWidth="1.700" strokeLinejoin="round"><path d="M1 7h3.500L10 1.800v16.400L4.500 13H1zM14 6l8 8M22 6l-8 8" /></svg>
              <svg width="24" height="20" viewBox="0 0 24 20"><path d="M1.500 11v5A2.500 2.500 0 0 0 4 18.500h14a2.500 2.500 0 0 0 2.500-2.500V7A2.500 2.500 0 0 0 18 4.500H9" fill="none" stroke="#fff" strokeWidth="1.700" /><path d="M21.500 8.500h1c.9 0 1.500.7 1.500 1.500v3c0 .8-.6 1.500-1.500 1.500h-1z" fill="#fff" /><path d="M9 7h8c.6 0 1 .4 1 1v7c0 .6-.4 1-1 1H5c-.6 0-1-.4-1-1v-1.500z" fill="#fff" /><path d="M5 0 0 6.500h3L1.500 11 8 4.500H5L7 0z" fill="#fff" /></svg>
            </TrayGroup>
          </TrayStatus>
          <TrayGroup aria-label="Clock and notifications">
            <Clock $align="right"><span>11:13</span><span>02-02-2025</span></Clock>
            <svg width="22" height="26" viewBox="0 0 22 26" fill="#99ebff"><path d="M11 1c5 0 8 3.500 8 8v6l2.500 4c.3.700 0 1.500-1 1.500h-19c-1 0-1.300-.8-1-1.500L3 15V9c0-4.500 3-8 8-8zM7 22h8c-.5 2-2 3-4 3s-3.500-1-4-3z" /></svg>
          </TrayGroup>
        </Tray>
      </Taskbar>
    </Screen>
  );
}
